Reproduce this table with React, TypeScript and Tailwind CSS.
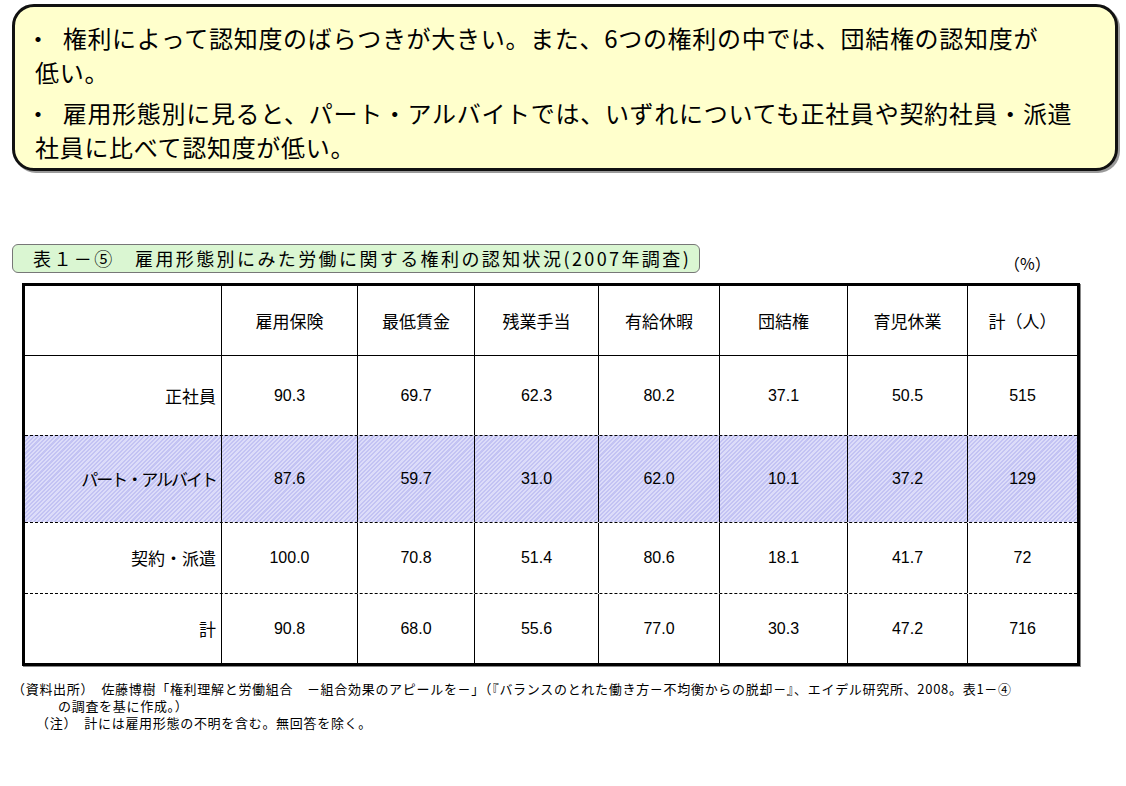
import React from 'react';

const jp = "font-['MS_PGothic','Noto_Sans_CJK_JP',sans-serif]";

const columns = ['雇用保険', '最低賃金', '残業手当', '有給休暇', '団結権', '育児休業', '計（人）'];
const widths = ['w-[136px]', 'w-[117px]', 'w-[124px]', 'w-[121px]', 'w-[128px]', 'w-[120px]', 'w-[110px]'];

interface Row {
  label: string;
  values: string[];
  height: string;
  highlight?: boolean;
}

const rows: Row[] = [
  { label: '正社員', values: ['90.3', '69.7', '62.3', '80.2', '37.1', '50.5', '515'], height: 'h-[80px]' },
  { label: 'パート・アルバイト', values: ['87.6', '59.7', '31.0', '62.0', '10.1', '37.2', '129'], height: 'h-[87px]', highlight: true },
  { label: '契約・派遣', values: ['100.0', '70.8', '51.4', '80.6', '18.1', '41.7', '72'], height: 'h-[71px]' },
  { label: '計', values: ['90.8', '68.0', '55.6', '77.0', '30.3', '47.2', '716'], height: 'h-[70px]' },
];

const Bullet: React.FC = () => <span className="ml-[-9px] mr-[12px]">・</span>;

const App: React.FC = () => {
  return (
    <div className={`w-[1126px] h-[786px] bg-white text-black ${jp} overflow-hidden`}>
      {/* summary box */}
      <div className="ml-[12px] mt-[4px] w-[1106px] h-[167px] rounded-[22px] border-[3px] border-[#111] bg-[#ffffcc] shadow-[2px_2px_0_#9a9a9a] pl-[20px] pt-[14px] text-[24px] leading-[34px] tracking-[0.7px]">
        <p className="whitespace-nowrap">
          <Bullet />権利によって認知度のばらつきが大きい。また、6つの権利の中では、団結権の認知度が
        </p>
        <p>低い。</p>
        <p className="mt-[7px] whitespace-nowrap">
          <Bullet />雇用形態別に見ると、パート・アルバイトでは、いずれについても正社員や契約社員・派遣
        </p>
        <p>社員に比べて認知度が低い。</p>
      </div>

      {/* table title */}
      <div className="mt-[73px] flex items-end">
        <div className="ml-[12px] w-[688px] h-[29px] rounded-[6px] border border-[#777] bg-[#daf6d2] pl-[20px] text-[18px] leading-[27px] tracking-[2.4px] whitespace-nowrap">
          表１－⑤　雇用形態別にみた労働に関する権利の認知状況(2007年調査)
        </div>
        <div className="ml-[304px] text-[16px] leading-[20px] mb-[0px]">（%）</div>
      </div>

      {/* table */}
      <div className="ml-[22px] mt-[10px] w-[1058px] border-[3px] border-black shadow-[1px_1px_0_#888]">
        <div className="flex h-[69px]">
          <div className="w-[196px]" />
          {columns.map((c, i) => (
            <div key={c} className={`${widths[i]} border-l border-black flex items-center justify-center text-[17px]`}>
              {c}
            </div>
          ))}
        </div>
        {rows.map((r, ri) => (
          <div
            key={r.label}
            className={`flex ${r.height} border-t border-black ${ri === 0 ? 'border-solid' : 'border-dashed'} ${
              r.highlight
                ? 'bg-[repeating-linear-gradient(135deg,#c3c3f3_0px,#c3c3f3_1.5px,#dcdcf9_1.5px,#dcdcf9_3px)]'
                : ''
            }`}
          >
            <div className={`w-[196px] flex items-center justify-end pr-[5px] text-[17px] ${r.highlight ? 'tracking-[-2px]' : ''}`}>
              {r.label}
            </div>
            {r.values.map((v, i) => (
              <div
                key={i}
                className={`${widths[i]} border-l border-black flex items-center justify-center text-[16px] text-black font-['Liberation_Sans',Arial,sans-serif]`}
              >
                {v}
              </div>
            ))}
          </div>
        ))}
      </div>

      {/* notes */}
      <div className="mt-[14px] text-[13px] leading-[17px] tracking-[0.7px] whitespace-nowrap">
        <p className="ml-[12px]">（資料出所）　佐藤博樹「権利理解と労働組合　－組合効果のアピールを－」（『バランスのとれた働き方－不均衡からの脱却－』、エイデル研究所、2008。表1－④</p>
        <p className="ml-[58px]">の調査を基に作成。）</p>
        <p className="ml-[36px]">（注）　計には雇用形態の不明を含む。無回答を除く。</p>
      </div>
    </div>
  );
};

export default App;
